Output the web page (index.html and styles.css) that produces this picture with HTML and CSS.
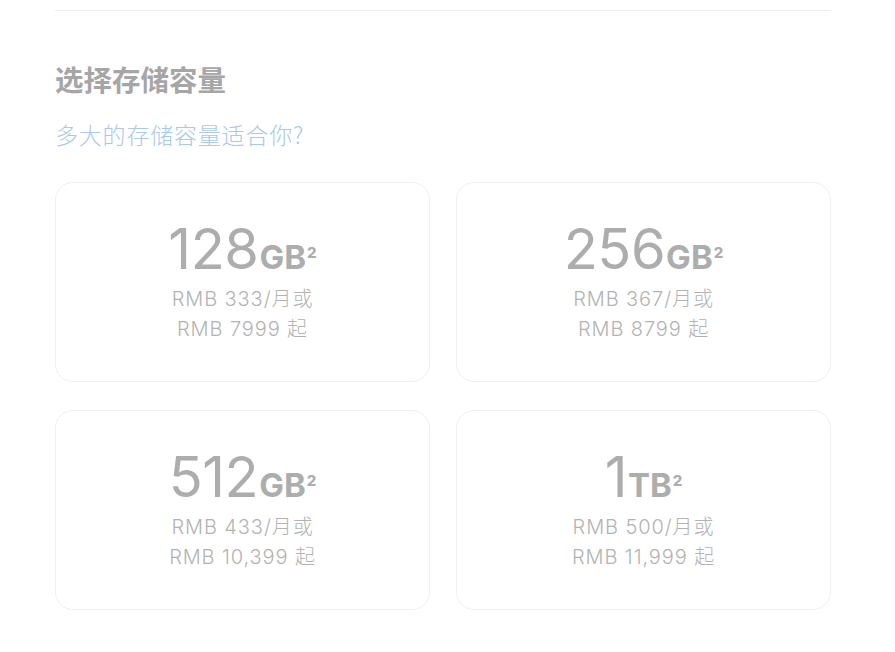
FILE: index.html
```html
<!DOCTYPE html>
<html lang="zh-CN">
<head>
<meta charset="utf-8">
<title>选择存储容量</title>
<link rel="stylesheet" href="styles.css">
</head>
<body>
<div class="page">
  <hr class="divider">
  <h2 class="title">选择存储容量</h2>
  <p class="subtitle">多大的存储容量适合你?</p>
  <div class="grid">
    <div class="card">
      <div class="size"><span class="num">128</span><span class="unit">GB</span><sup class="note">2</sup></div>
      <div class="price">RMB 333/月或<br>RMB 7999 起</div>
    </div>
    <div class="card">
      <div class="size"><span class="num">256</span><span class="unit">GB</span><sup class="note">2</sup></div>
      <div class="price">RMB 367/月或<br>RMB 8799 起</div>
    </div>
    <div class="card">
      <div class="size"><span class="num">512</span><span class="unit">GB</span><sup class="note">2</sup></div>
      <div class="price">RMB 433/月或<br>RMB 10,399 起</div>
    </div>
    <div class="card">
      <div class="size"><span class="num">1</span><span class="unit">TB</span><sup class="note">2</sup></div>
      <div class="price">RMB 500/月或<br>RMB 11,999 起</div>
    </div>
  </div>
</div>
</body>
</html>
```
FILE: styles.css
```css
html, body {
  margin: 0;
  padding: 0;
  background: #fff;
}
body {
  font-family: Inter, "Noto Sans CJK SC", sans-serif;
}
.page {
  padding: 10px 55px 0 55px;
  width: 776px;
  box-sizing: content-box;
}
.divider {
  margin: 0;
  border: 0;
  border-top: 1px solid #ececec;
  height: 0;
}
.title {
  margin: 50px 0 0 0;
  font-family: "Noto Sans CJK SC", sans-serif;
  font-size: 28.5px;
  line-height: 36px;
  font-weight: 700;
  color: #a6a6a6;
}
.subtitle {
  margin: 23px 0 0 0;
  font-family: "Noto Sans CJK SC", sans-serif;
  font-size: 23px;
  line-height: 28px;
  font-weight: 300;
  letter-spacing: 0.8px;
  color: #a9c9ec;
}
.grid {
  margin-top: 34px;
  display: grid;
  grid-template-columns: 375px 375px;
  column-gap: 26px;
  row-gap: 28px;
}
.card {
  height: 200px;
  box-sizing: border-box;
  border: 1px solid #efefef;
  border-radius: 18px;
  display: flex;
  flex-direction: column;
  align-items: center;
  justify-content: center;
  padding-top: 2px;
}
.size {
  color: #adadad;
  line-height: 52px;
  height: 52px;
  white-space: nowrap;
}
.num {
  font-size: 56px;
  font-weight: 400;
  letter-spacing: -0.5px;
}
.unit {
  font-size: 33px;
  font-weight: 700;
  margin-left: 1px;
}
.note {
  font-size: 15px;
  font-weight: 800;
  vertical-align: 11px;
  line-height: 0;
  margin-left: 1px;
}
.price {
  margin-top: 9px;
  font-size: 20px;
  line-height: 30px;
  font-weight: 300;
  letter-spacing: 0.9px;
  color: #b3b3b3;
  text-align: center;
}
```
